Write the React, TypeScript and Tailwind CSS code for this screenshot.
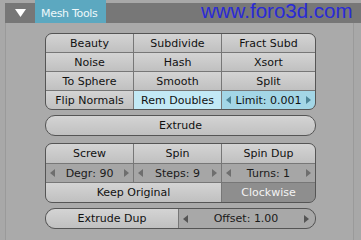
import React from "react";

const Arrow = ({ dir, color }: { dir: "l" | "r"; color: string }) => (
  <svg width="5" height="8" viewBox="0 0 5 8" className="shrink-0">
    {dir === "l" ? <polygon points="5,0 0,4 5,8" fill={color} /> : <polygon points="0,0 5,4 0,8" fill={color} />}
  </svg>
);

const Btn = ({ children, className = "" }: { children: React.ReactNode; className?: string }) => (
  <div className={`flex items-center justify-center bg-linear-to-b from-[#d4d4d4] to-[#c0c0c0] text-[#111] ${className}`}>{children}</div>
);

const Num = ({ label, className = "", arrow = "#6e6e6e" }: { label: string; className?: string; arrow?: string }) => (
  <div className={`flex items-center justify-between px-[4px] ${className}`}>
    <Arrow dir="l" color={arrow} />
    <span>{label}</span>
    <Arrow dir="r" color={arrow} />
  </div>
);

export default function App() {
  return (
    <div className="relative w-[361px] h-[240px] overflow-hidden bg-[#a8a8a8] pt-[3px] font-['DejaVu_Sans',sans-serif] text-[11px] leading-none">
      <div className="ml-[5px] flex h-[20px] bg-[#777777]">
        <div className="flex w-[30px] items-center justify-center">
          <svg width="11" height="8" viewBox="0 0 11 8">
            <polygon points="0,0 11,0 5.5,8" fill="#ffffff" />
          </svg>
        </div>
        <div className="-mt-[3px] flex h-[23px] w-[71px] items-center bg-[#5ca8c0] pl-[6px] pt-[3px] text-[11px] tracking-[-0.3px] text-[#eef8fb]">
          Mesh Tools
        </div>
      </div>
      <div className="ml-[5px] h-[217px] w-[349px] border-x border-[#9a9a9a] bg-[#aaaaaa] pl-[39px] pt-[10px]">
        <div className="grid w-[271px] grid-cols-[87px_87px_93px] grid-rows-[18px_18px_18px_18px] gap-px overflow-hidden rounded-[7px] border border-[#555] bg-[#777]">
          <Btn>Beauty</Btn>
          <Btn>Subdivide</Btn>
          <Btn>Fract Subd</Btn>
          <Btn>Noise</Btn>
          <Btn>Hash</Btn>
          <Btn>Xsort</Btn>
          <Btn>To Sphere</Btn>
          <Btn>Smooth</Btn>
          <Btn>Split</Btn>
          <Btn>Flip Normals</Btn>
          <div className="flex items-center justify-center bg-[#c2e9f5] text-[#111]">Rem Doubles</div>
          <Num label="Limit: 0.001" className="bg-[#a3d6e6] text-[#111]" arrow="#4e8597" />
        </div>
        <Btn className="mt-[5px] h-[21px] w-[271px] rounded-[10px] border border-[#555]">Extrude</Btn>
        <div className="mt-[7px] grid w-[271px] grid-cols-[87px_87px_93px] grid-rows-[19px_18px_19px] gap-px overflow-hidden rounded-[7px] border border-[#555] bg-[#777]">
          <Btn>Screw</Btn>
          <Btn>Spin</Btn>
          <Btn>Spin Dup</Btn>
          <Num label="Degr: 90" className="bg-[#a6a6a6] text-[#1a1a1a]" />
          <Num label="Steps: 9" className="bg-[#a6a6a6] text-[#1a1a1a]" />
          <Num label="Turns: 1" className="bg-[#a6a6a6] text-[#1a1a1a]" />
          <Btn className="col-span-2">Keep Original</Btn>
          <div className="flex items-center justify-center bg-[#8e8e8e] text-[#f4f4f4]">Clockwise</div>
        </div>
        <div className="mt-[5px] grid h-[21px] w-[271px] grid-cols-[132px_136px] gap-px overflow-hidden rounded-[10px] border border-[#555] bg-[#777]">
          <Btn>Extrude Dup</Btn>
          <Num label="Offset: 1.00" className="bg-[#a8a8a8] pr-[6px] text-[#1a1a1a]" arrow="#555" />
        </div>
      </div>
      <div className="absolute left-[201px] top-[0px] font-['Liberation_Sans',sans-serif] text-[20.5px] leading-[22px] text-[#2a2ad6]">
        www.foro3d.com
      </div>
    </div>
  );
}
